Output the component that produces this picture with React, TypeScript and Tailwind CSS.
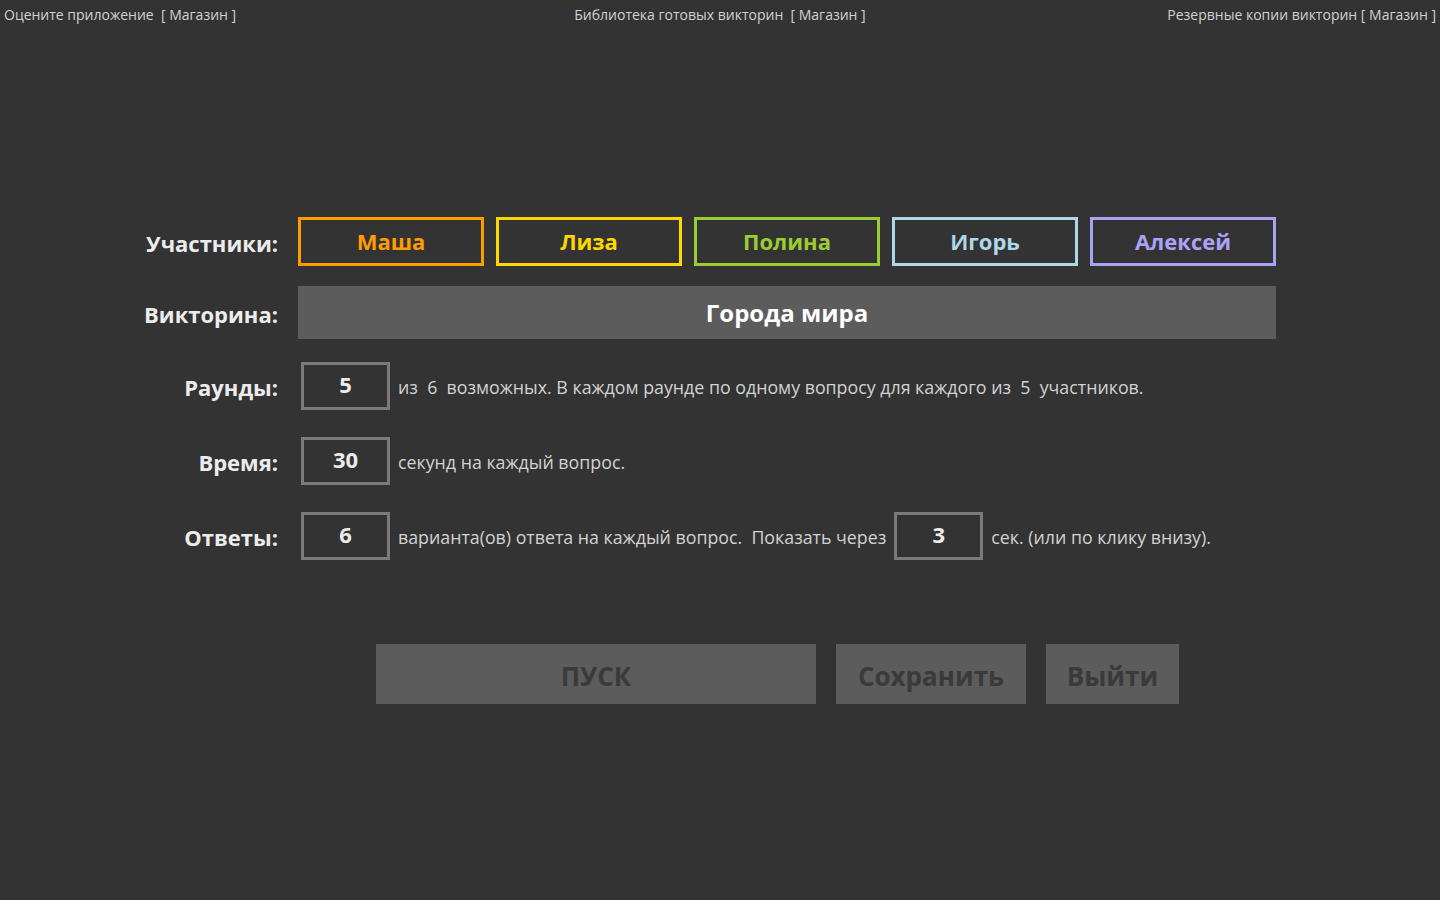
import React from "react";

const players = [
  { name: "Маша", color: "border-[#ff9c00] text-[#ff9c00]" },
  { name: "Лиза", color: "border-[#ffd700] text-[#ffd700]" },
  { name: "Полина", color: "border-[#9acd32] text-[#9acd32]" },
  { name: "Игорь", color: "border-[#add8e6] text-[#add8e6]" },
  { name: "Алексей", color: "border-[#aaa2f6] text-[#aaa2f6]" },
];

function Label({ children }: { children: React.ReactNode }) {
  return (
    <div className="w-[150px] shrink-0 pt-[3px] text-right text-[22px] font-bold text-[#ececec]">
      {children}
    </div>
  );
}

function NumBox({ value }: { value: string }) {
  return (
    <div className="flex h-[48px] w-[89px] shrink-0 items-center justify-center border-[3px] border-[#7a7a7a] pb-[3px] text-[22px] font-bold text-[#ececec]">
      {value}
    </div>
  );
}

export default function App() {
  return (
    <div
      className="h-[900px] w-[1440px] overflow-hidden bg-[#333333]"
      style={{ fontFamily: '"Open Sans", "Noto Sans", sans-serif' }}
    >
      <div className="grid h-[30px] grid-cols-3 items-center px-1 pb-[2px] text-[14px] text-[#d2d2d2]">
        <span className="whitespace-pre">Оцените приложение  [ Магазин ]</span>
        <span className="whitespace-pre text-center">Библиотека готовых викторин  [ Магазин ]</span>
        <span className="whitespace-pre text-right">Резервные копии викторин [ Магазин ]</span>
      </div>

      <div className="ml-[128px] mt-[187px] flex flex-col">
        <div className="flex h-[49px] items-center gap-[20px]">
          <Label>Участники:</Label>
          <div className="flex gap-[12px]">
            {players.map((p) => (
              <div
                key={p.name}
                className={`flex h-[49px] w-[186px] items-center justify-center border-[3px] pb-[1px] text-[22px] font-bold ${p.color}`}
              >
                {p.name}
              </div>
            ))}
          </div>
        </div>

        <div className="mt-[20px] flex h-[53px] items-center gap-[20px]">
          <Label>Викторина:</Label>
          <div className="flex h-[53px] w-[978px] items-center justify-center bg-[#5c5c5c] text-[24px] font-bold text-white">
            Города мира
          </div>
        </div>

        <div className="mt-[23px] flex h-[48px] items-center">
          <Label>Раунды:</Label>
          <div className="ml-[23px]">
            <NumBox value="5" />
          </div>
          <span className="ml-[8px] whitespace-pre pt-[3px] text-[17.8px] text-[#d2d2d2]">
            из  6  возможных. В каждом раунде по одному вопросу для каждого из  5  участников.
          </span>
        </div>

        <div className="mt-[27px] flex h-[48px] items-center">
          <Label>Время:</Label>
          <div className="ml-[23px]">
            <NumBox value="30" />
          </div>
          <span className="ml-[8px] pt-[3px] text-[17.8px] text-[#d2d2d2]">секунд на каждый вопрос.</span>
        </div>

        <div className="mt-[27px] flex h-[48px] items-center">
          <Label>Ответы:</Label>
          <div className="ml-[23px]">
            <NumBox value="6" />
          </div>
          <span className="ml-[8px] whitespace-pre pt-[3px] text-[17.8px] text-[#d2d2d2]">
            варианта(ов) ответа на каждый вопрос.  Показать через
          </span>
          <div className="ml-[8px]">
            <NumBox value="3" />
          </div>
          <span className="ml-[8px] pt-[3px] text-[17.8px] text-[#d2d2d2]">сек. (или по клику внизу).</span>
        </div>

        <div className="ml-[248px] mt-[84px] flex gap-[20px]">
          <button className="flex h-[60px] w-[440px] items-center justify-center bg-[#5c5c5c] pt-[4px] text-[26px] font-bold text-[#3a3a3a]">
            ПУСК
          </button>
          <button className="flex h-[60px] w-[190px] items-center justify-center bg-[#5c5c5c] pt-[4px] text-[26px] font-bold text-[#3a3a3a]">
            Сохранить
          </button>
          <button className="flex h-[60px] w-[133px] items-center justify-center bg-[#5c5c5c] pt-[4px] text-[26px] font-bold text-[#3a3a3a]">
            Выйти
          </button>
        </div>
      </div>
    </div>
  );
}
